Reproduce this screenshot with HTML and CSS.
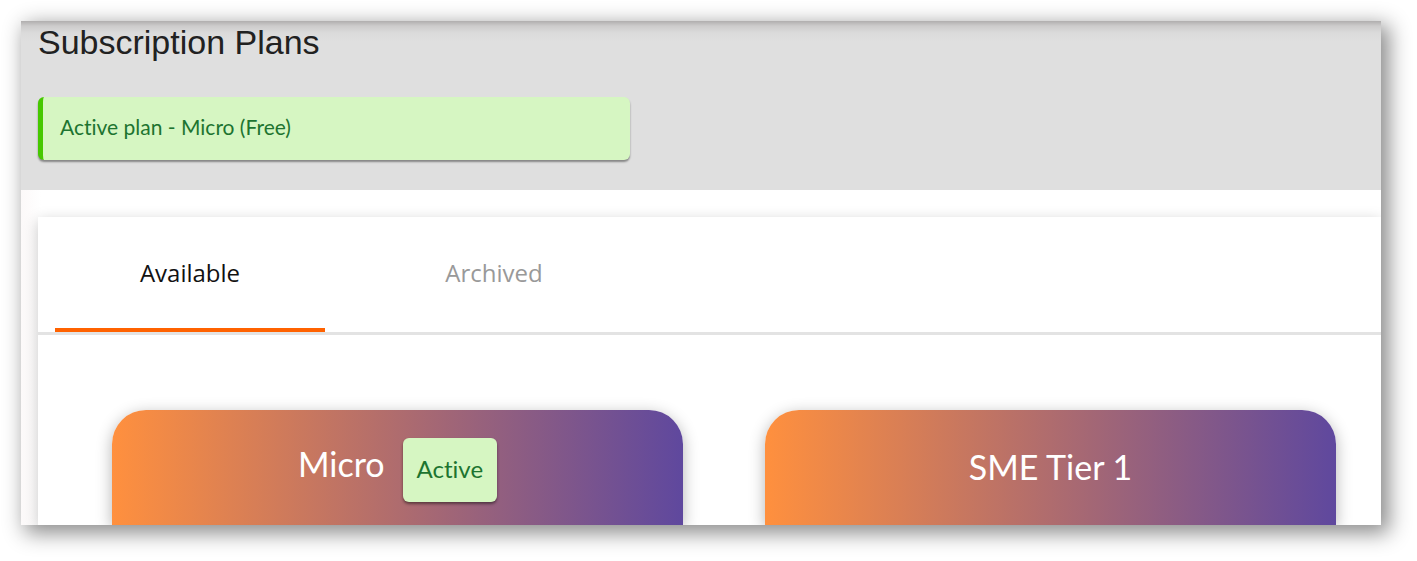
FILE: index.html
```html
<!DOCTYPE html>
<html lang="en">
<head>
<meta charset="utf-8">
<title>Subscription Plans</title>
<link rel="stylesheet" href="styles.css">
</head>
<body>
<main class="window">
  <header class="header">
    <h1 class="title">Subscription Plans</h1>
    <p class="notice">Active plan - Micro (Free)</p>
  </header>
  <div class="content">
    <section class="panel">
      <div class="tabs" role="tablist">
        <button class="tab tab-active" type="button" role="tab" aria-selected="true">Available</button>
        <button class="tab" type="button" role="tab" aria-selected="false">Archived</button>
      </div>
      <div class="plans">
        <article class="plan plan-current">
          <h2 class="plan-name">Micro</h2>
          <span class="badge">Active</span>
        </article>
        <article class="plan">
          <h2 class="plan-name">SME Tier 1</h2>
        </article>
      </div>
    </section>
  </div>
</main>
</body>
</html>
```

FILE: styles.css
```css
* {
  box-sizing: border-box;
}

body {
  display: flex;
  height: 100vh;
  margin: 0;
  padding: 21px 36px 36px 21px;
  overflow: hidden;
  background: #fff;
  font-family: Lato, "Open Sans", sans-serif;
  font-variant-ligatures: none;
}

.window {
  display: flex;
  flex: 1;
  flex-direction: column;
  min-width: 0;
  background: #fff;
  box-shadow: 6px 6px 20px 2px rgba(0, 0, 0, 0.46);
}

.header {
  padding: 0 17px 30px;
  background: linear-gradient(#b0aeae, #cdcccc 5px, #dbdbdb 12px, #dfdfdf 20px);
}

.title {
  margin: 0 0 34px;
  color: #212121;
  font: 400 34px/42px "Liberation Sans", Arial, sans-serif;
}

.notice {
  max-width: 592px;
  margin: 0;
  padding: 16px 17px 20px;
  border-left: 5px solid #46c800;
  border-radius: 6px;
  background: #d6f6c2;
  box-shadow: 0 2px 2px rgba(0, 0, 0, 0.4);
  color: #1d7430;
  font-size: 21px;
  line-height: 27px;
}

.content {
  display: flex;
  flex: 1;
  min-height: 0;
  padding: 27px 0 0 17px;
  overflow: hidden;
  background: linear-gradient(90deg, #fcf9f9, #fff 20px);
}

.panel {
  display: flex;
  flex: 1;
  flex-direction: column;
  background: #fff;
  box-shadow: 0 4px 14px rgba(0, 0, 0, 0.22);
}

.tabs {
  display: flex;
  gap: 34px;
  padding-left: 17px;
  border-bottom: 3px solid #e3e3e3;
}

.tab {
  width: 270px;
  padding: 40px 0 39px;
  border: 0;
  border-bottom: 4px solid transparent;
  background: none;
  color: #999;
  font: 400 24px/32px "Open Sans", Lato, sans-serif;
}

.tab-active {
  border-bottom-color: #ff6200;
  color: #111;
}

.plans {
  display: grid;
  flex: 1;
  grid-template-columns: 1fr 1fr;
  gap: 82px;
  padding: 75px 45px 0 74px;
}

.plan {
  display: flex;
  align-items: flex-start;
  justify-content: center;
  gap: 18px;
  padding-top: 28px;
  border-radius: 34px 34px 0 0;
  background: linear-gradient(90deg, #ff903e, #5f489e);
  box-shadow: 0 4px 16px rgba(0, 0, 0, 0.3);
}

.plan-name {
  margin: 0;
  color: #fff;
  font-size: 34px;
  font-weight: 400;
  line-height: 58px;
}

.plan-current .plan-name {
  line-height: 52px;
}

.badge {
  padding: 15px 14px 17px;
  border-radius: 6px;
  background: #d6f6c2;
  box-shadow: 0 2px 3px rgba(0, 0, 0, 0.45);
  color: #1d7430;
  font-size: 24px;
  line-height: 32px;
}
```
